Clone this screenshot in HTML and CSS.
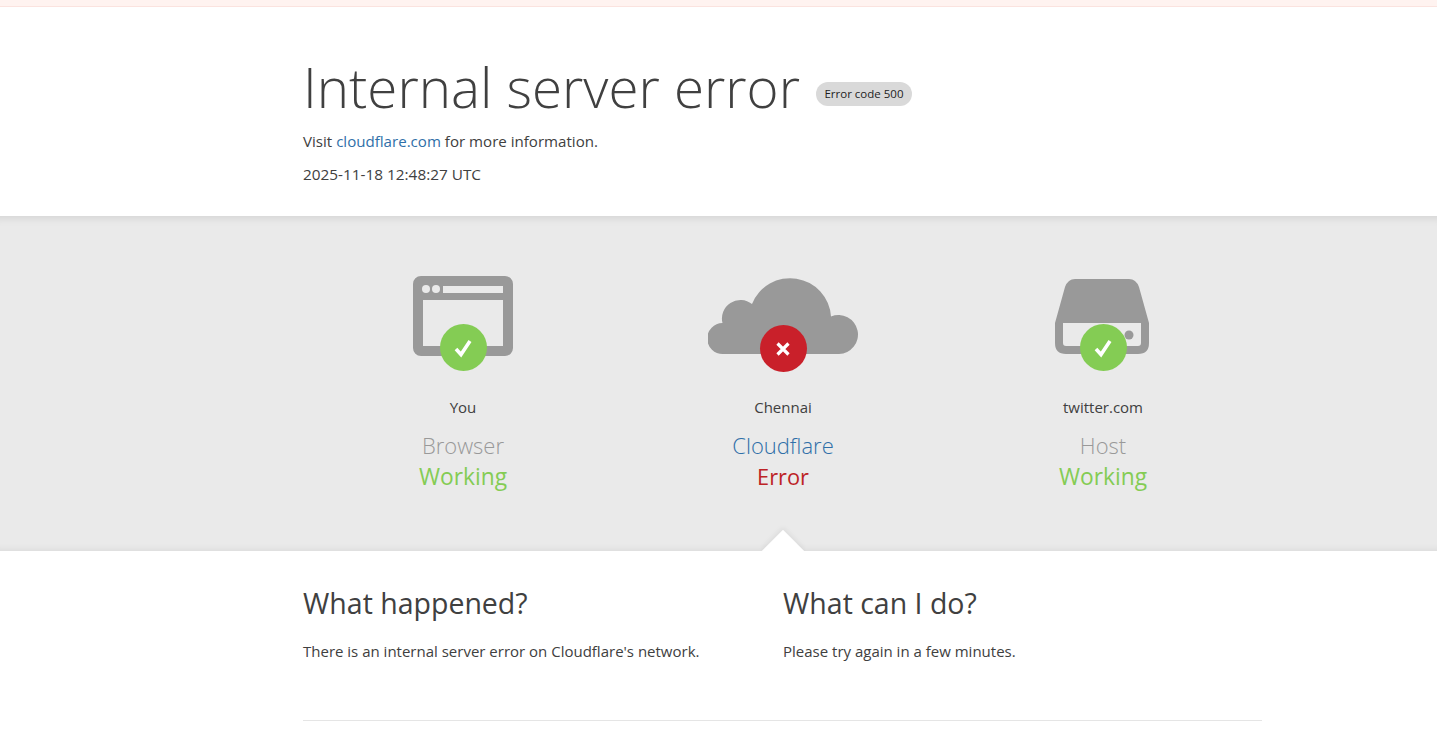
FILE: index.html
```html
<!DOCTYPE html>
<html lang="en">
<head>
  <meta charset="UTF-8">
  <meta name="viewport" content="width=device-width, initial-scale=1.0">
  <title>Internal server error</title>
  <link rel="stylesheet" href="styles.css">
</head>
<body>

  <div class="top-strip"></div>

  <header class="error-header">
    <div class="container">
      <div class="title-row">
        <h1>Internal server error</h1>
        <span class="code-badge">Error code 500</span>
      </div>
      <p class="visit">Visit <a href="#">cloudflare.com</a> for more information.</p>
      <p class="stamp">2025-11-18 12:48:27 UTC</p>
    </div>
  </header>

  <section class="status-band">
    <div class="container status-grid">

      <div class="status-item">
        <div class="status-icon">
          <svg width="100" height="80" viewBox="0 0 100 80">
            <path fill="#999" fill-rule="evenodd" d="M8 0h84a8 8 0 0 1 8 8v64a8 8 0 0 1-8 8H8a8 8 0 0 1-8-8V8a8 8 0 0 1 8-8zM10 24v46h80V24zM30 10v7h60v-7z"/>
            <circle cx="13" cy="13" r="4" fill="#eaeaea"/>
            <circle cx="23" cy="13" r="4" fill="#eaeaea"/>
          </svg>
          <span class="badge badge-ok">
            <svg width="20" height="20" viewBox="0 0 20 20"><path d="M3 11l5 5.5L17 3" fill="none" stroke="#fff" stroke-width="3.6"/></svg>
          </span>
        </div>
        <div class="status-place">You</div>
        <div class="status-name">Browser</div>
        <div class="status-state ok">Working</div>
      </div>

      <div class="status-item">
        <div class="status-icon">
          <svg width="151" height="80" viewBox="0.5 0 151 80">
            <path fill="#999" d="M15.5 78A15.5 15.5 0 0 1 15 47 18.5 18.5 0 0 1 44.5 28 41 41 0 0 1 123.5 40.5 19.5 19.5 0 1 1 131.5 78z"/>
          </svg>
          <span class="badge badge-err">
            <svg width="20" height="20" viewBox="0 0 20 20"><path d="M4.5 4.5l11 11M15.5 4.5l-11 11" fill="none" stroke="#fff" stroke-width="3.2"/></svg>
          </span>
        </div>
        <div class="status-place">Chennai</div>
        <div class="status-name link">Cloudflare</div>
        <div class="status-state err">Error</div>
      </div>

      <div class="status-item">
        <div class="status-icon">
          <svg width="96" height="80" viewBox="0 0 96 80">
            <path fill="#999" fill-rule="evenodd" d="M20 3h54q7 0 10 8l10 36v20q0 11-11 11H11q-11 0-11-11V47l10-36q3-8 10-8zM8 47v20q0 3 3 3h72q3 0 3-3V47z"/>
            <circle cx="74" cy="59" r="4.5" fill="#999"/>
          </svg>
          <span class="badge badge-ok">
            <svg width="20" height="20" viewBox="0 0 20 20"><path d="M3 11l5 5.5L17 3" fill="none" stroke="#fff" stroke-width="3.6"/></svg>
          </span>
        </div>
        <div class="status-place">twitter.com</div>
        <div class="status-name">Host</div>
        <div class="status-state ok">Working</div>
      </div>

    </div>
    <div class="arrow"></div>
  </section>

  <section class="details">
    <div class="container details-grid">
      <div class="details-col">
        <h2>What happened?</h2>
        <p>There is an internal server error on Cloudflare's network.</p>
      </div>
      <div class="details-col">
        <h2>What can I do?</h2>
        <p>Please try again in a few minutes.</p>
      </div>
    </div>
  </section>

  <div class="container">
    <div class="footer-rule"></div>
  </div>

</body>
</html>
```

FILE: styles.css
```css
html, body {
  height: 100%;
}

body {
  margin: 0;
  font-family: "Open Sans", "Noto Sans", sans-serif;
  font-size: 15px;
  color: #404040;
  background-color: #fff;
  overflow: hidden;
}

a {
  color: #2f6fa8;
  text-decoration: none;
}

.container {
  width: 959px;
  margin-left: 303px;
}

.top-strip {
  height: 6px;
  background-color: #fff3f0;
  border-bottom: 1px solid #fbe3df;
}

.error-header {
  height: 209px;
  box-sizing: border-box;
  padding-top: 41px;
}

.title-row {
  display: flex;
  align-items: center;
  height: 78px;
}

h1 {
  margin: 0;
  font-size: 54.7px;
  font-weight: 300;
  line-height: 78px;
  color: #404040;
}

.code-badge {
  margin-left: 16px;
  margin-top: 14px;
  padding: 0 8.5px;
  height: 24px;
  line-height: 24px;
  border-radius: 12px;
  background-color: #d9d9d9;
  font-size: 11.5px;
  color: #1d1d1d;
  white-space: nowrap;
}

.visit {
  margin: 3px 0 0;
  font-size: 15.1px;
  line-height: 24px;
}

.stamp {
  margin: 9px 0 0;
  font-size: 15.35px;
  line-height: 24px;
}

.status-band {
  position: relative;
  height: 335px;
  box-sizing: border-box;
  padding-top: 60px;
  background-color: #eaeaea;
  box-shadow: inset 0 10px 8px -8px rgba(0, 0, 0, 0.1), inset 0 -8px 6px -6px rgba(0, 0, 0, 0.06);
}

.status-grid {
  display: grid;
  grid-template-columns: repeat(3, 320px);
}

.status-item {
  text-align: center;
}

.status-icon {
  position: relative;
  height: 96px;
  display: flex;
  justify-content: center;
}

.badge {
  position: absolute;
  left: 50%;
  top: 48px;
  width: 47px;
  height: 47px;
  margin-left: -23.5px;
  border-radius: 50%;
  display: flex;
  align-items: center;
  justify-content: center;
}

.badge-ok {
  background-color: #84cc54;
}

.badge-err {
  top: 49px;
  background-color: #c9202a;
}

.status-place {
  margin-top: 23px;
  line-height: 24px;
}

.status-name {
  margin-top: 10px;
  font-size: 22px;
  font-weight: 300;
  line-height: 33px;
  color: #999;
}

.status-name.link {
  color: #2f6fa8;
}

.status-state {
  font-size: 22.8px;
  line-height: 30px;
}

.status-state.ok {
  color: #84cc54;
}

.status-state.err {
  font-size: 21.8px;
  color: #bd2426;
}

.arrow {
  position: absolute;
  left: 768px;
  bottom: -15px;
  width: 30px;
  height: 30px;
  background-color: #fff;
  transform: rotate(45deg);
  box-shadow: -2px -2px 5px rgba(0, 0, 0, 0.06);
}

.details {
  position: relative;
  background-color: #fff;
  padding-top: 31px;
}

.details-grid {
  display: grid;
  grid-template-columns: 480px 479px;
}

h2 {
  margin: 0;
  font-size: 28.5px;
  font-weight: 400;
  line-height: 42px;
  color: #404040;
}

.details-col p {
  margin: 15px 0 0;
  line-height: 24px;
}

.footer-rule {
  margin-top: 57px;
  border-top: 1px solid #e5e5e5;
}
```
